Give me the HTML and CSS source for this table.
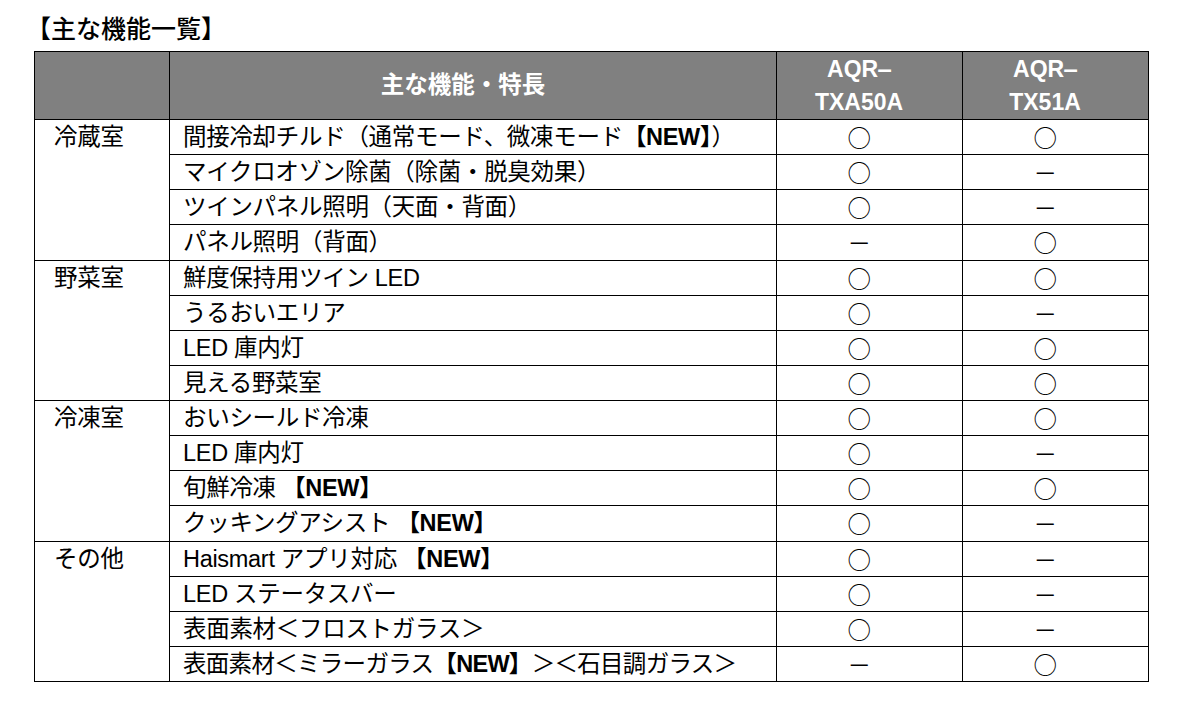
FILE: index.html
```html
<!DOCTYPE html>
<html lang="ja">
<head>
<meta charset="utf-8">
<link rel="stylesheet" href="styles.css">
</head>
<body>
<div class="page">
  <h1 class="title">【主な機能一覧】</h1>
  <table class="spec">
    <colgroup>
      <col class="c-cat"><col class="c-feat"><col class="c-m1"><col class="c-m2">
    </colgroup>
    <thead>
      <tr>
        <th></th>
        <th class="jp">主な機能・特長</th>
        <th class="model">AQR‒<br>TXA50A</th>
        <th class="model">AQR‒<br>TX51A</th>
      </tr>
    </thead>
    <tbody>
      <tr><td class="cat" rowspan="4">冷蔵室</td><td class="feat">間接冷却チルド（通常モード、微凍モード<b>【NEW】</b>）</td><td class="mk">○</td><td class="mk">○</td></tr>
      <tr><td class="feat">マイクロオゾン除菌（除菌・脱臭効果）</td><td class="mk">○</td><td class="mk">－</td></tr>
      <tr><td class="feat">ツインパネル照明（天面・背面）</td><td class="mk">○</td><td class="mk">－</td></tr>
      <tr><td class="feat">パネル照明（背面）</td><td class="mk">－</td><td class="mk">○</td></tr>
      <tr><td class="cat" rowspan="4">野菜室</td><td class="feat">鮮度保持用ツイン LED</td><td class="mk">○</td><td class="mk">○</td></tr>
      <tr><td class="feat">うるおいエリア</td><td class="mk">○</td><td class="mk">－</td></tr>
      <tr><td class="feat">LED 庫内灯</td><td class="mk">○</td><td class="mk">○</td></tr>
      <tr><td class="feat">見える野菜室</td><td class="mk">○</td><td class="mk">○</td></tr>
      <tr><td class="cat" rowspan="4">冷凍室</td><td class="feat">おいシールド冷凍</td><td class="mk">○</td><td class="mk">○</td></tr>
      <tr><td class="feat">LED 庫内灯</td><td class="mk">○</td><td class="mk">－</td></tr>
      <tr><td class="feat">旬鮮冷凍 <b>【NEW】</b></td><td class="mk">○</td><td class="mk">○</td></tr>
      <tr><td class="feat">クッキングアシスト <b>【NEW】</b></td><td class="mk">○</td><td class="mk">－</td></tr>
      <tr><td class="cat" rowspan="4">その他</td><td class="feat">Haismart アプリ対応 <b>【NEW】</b></td><td class="mk">○</td><td class="mk">－</td></tr>
      <tr><td class="feat">LED ステータスバー</td><td class="mk">○</td><td class="mk">－</td></tr>
      <tr><td class="feat">表面素材＜フロストガラス＞</td><td class="mk">○</td><td class="mk">－</td></tr>
      <tr><td class="feat narrow">表面素材＜ミラーガラス<b>【NEW】</b>＞＜石目調ガラス＞</td><td class="mk">－</td><td class="mk">○</td></tr>
    </tbody>
  </table>
</div>
</body>
</html>
```

FILE: styles.css
```css
html, body {
  margin: 0;
  padding: 0;
  background: #fff;
}
body {
  font-family: "Liberation Sans", "Noto Sans CJK JP", sans-serif;
  color: #000;
}
.page {
  padding: 14px 0 0 34px;
}
.title {
  margin: 0 0 6px -8px;
  font-size: 25px;
  line-height: 31px;
  font-weight: 500;
}
.spec {
  border-collapse: collapse;
  table-layout: fixed;
  width: 1114px;
}
.c-cat { width: 135px; }
.c-feat { width: 607px; }
.c-m1 { width: 186px; }
.c-m2 { width: 186px; }
.spec th, .spec td {
  border: 1px solid #000;
  padding: 0;
}
.spec th {
  background: #808080;
  color: #fff;
  height: 67px;
  font-size: 23px;
  line-height: 33px;
  font-weight: 700;
  text-align: center;
}
.spec th.jp {
  font-size: 23.5px;
  padding-right: 20px;
}
.spec th.model {
  padding-right: 21px;
}
.spec td {
  height: 34.125px;
  font-size: 23.5px;
  line-height: 34px;
  letter-spacing: -0.3px;
  white-space: nowrap;
}
.cat {
  vertical-align: top;
  padding-left: 19px !important;
}
.feat {
  padding-left: 13px !important;
}
.feat b {
  font-weight: 700;
}
.feat.narrow {
  letter-spacing: -0.7px;
}
.mk {
  text-align: center;
  font-family: "Noto Sans CJK JP", sans-serif;
  padding-right: 21px !important;
}
```
